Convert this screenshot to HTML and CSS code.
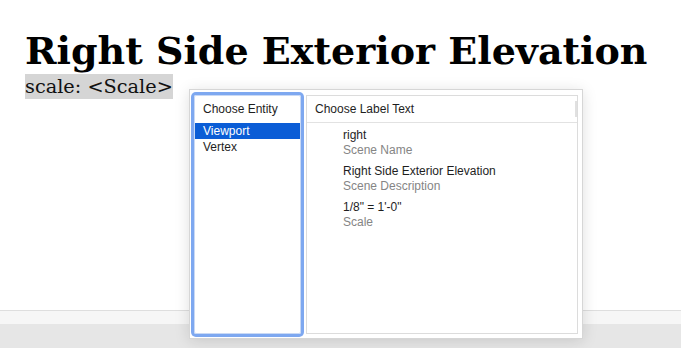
FILE: index.html
```html
<!DOCTYPE html>
<html lang="en">
<head>
    <meta charset="UTF-8">
    <meta name="viewport" content="width=device-width, initial-scale=1.0">
    <title>Label Editor</title>
    <link rel="stylesheet" href="styles.css">
</head>
<body>
    <div class="page">
        <h1 class="title">Right Side Exterior Elevation</h1>
        <div class="scale-line"><span class="scale-tag">scale: &lt;Scale&gt;</span></div>
    </div>
    <div class="footer">
        <div class="footer-light"></div>
        <div class="footer-dark"></div>
    </div>

    <!-- Label picker popover -->
    <div class="picker">
        <div class="entity-list">
            <div class="list-header entity-header">Choose Entity</div>
            <div class="entity selected">Viewport</div>
            <div class="entity">Vertex</div>
        </div>
        <div class="label-list">
            <div class="list-header label-header">Choose Label Text<span class="header-grip"></span></div>
            <div class="label-items">
                <div class="label-item">
                    <div class="label-value">right</div>
                    <div class="label-name">Scene Name</div>
                </div>
                <div class="label-item">
                    <div class="label-value">Right Side Exterior Elevation</div>
                    <div class="label-name">Scene Description</div>
                </div>
                <div class="label-item">
                    <div class="label-value">1/8" = 1'-0"</div>
                    <div class="label-name">Scale</div>
                </div>
            </div>
        </div>
    </div>
</body>
</html>
```

FILE: styles.css
```css
html, body {
    height: 100%;
}
body {
    margin: 0;
    background: #fff;
    color: #000;
    display: flex;
    flex-direction: column;
    overflow: hidden;
}
.page {
    flex: 1;
    padding: 30px 0 0 25px;
}
.title {
    margin: 0;
    font-family: "DejaVu Serif", Georgia, serif;
    font-weight: bold;
    font-size: 38px;
    line-height: 41px;
}
.scale-line {
    margin-top: 3px;
}
.scale-tag {
    display: inline-block;
    background: #d5d5d5;
    font-family: "DejaVu Serif", Georgia, serif;
    font-size: 19.3px;
    line-height: 25px;
    color: #111;
}
.footer {
    border-top: 1px solid #dedede;
}
.footer-light {
    height: 13px;
    background: #f6f6f6;
}
.footer-dark {
    height: 24px;
    background: #e6e6e6;
}

/* popover */
.picker {
    position: absolute;
    left: 189px;
    top: 89px;
    width: 384px;
    height: 239px;
    padding: 5px 4px 4px 4px;
    display: flex;
    gap: 5px;
    background: #fff;
    border: 1px solid #d6d6d6;
    box-shadow: 0 2px 14px rgba(0, 0, 0, 0.13);
    font-family: "Liberation Sans", Arial, sans-serif;
    font-size: 12px;
    color: #1e1e1e;
}
.entity-list {
    width: 105px;
    border: 1px solid #c9d9f5;
    border-radius: 2px;
    box-shadow: 0 0 0 3px #7ea8f0;
}
.label-list {
    flex: 1;
    border: 1px solid #dcdcdc;
}
.list-header {
    height: 26px;
    line-height: 26px;
    padding-left: 8px;
}
.entity-header {
    height: 27px;
}
.label-header {
    position: relative;
    border-bottom: 1px solid #e2e2e2;
}
.header-grip {
    position: absolute;
    right: 0;
    top: 5px;
    width: 2px;
    height: 16px;
    background: #e0e0e0;
}
.entity {
    height: 16px;
    line-height: 16px;
    padding-left: 8px;
}
.entity.selected {
    background: #0b5dd6;
    color: #fff;
}
.label-items {
    padding: 5px 0 0 36px;
}
.label-item {
    margin-bottom: 6px;
    line-height: 15px;
}
.label-name {
    color: #858585;
}
```
